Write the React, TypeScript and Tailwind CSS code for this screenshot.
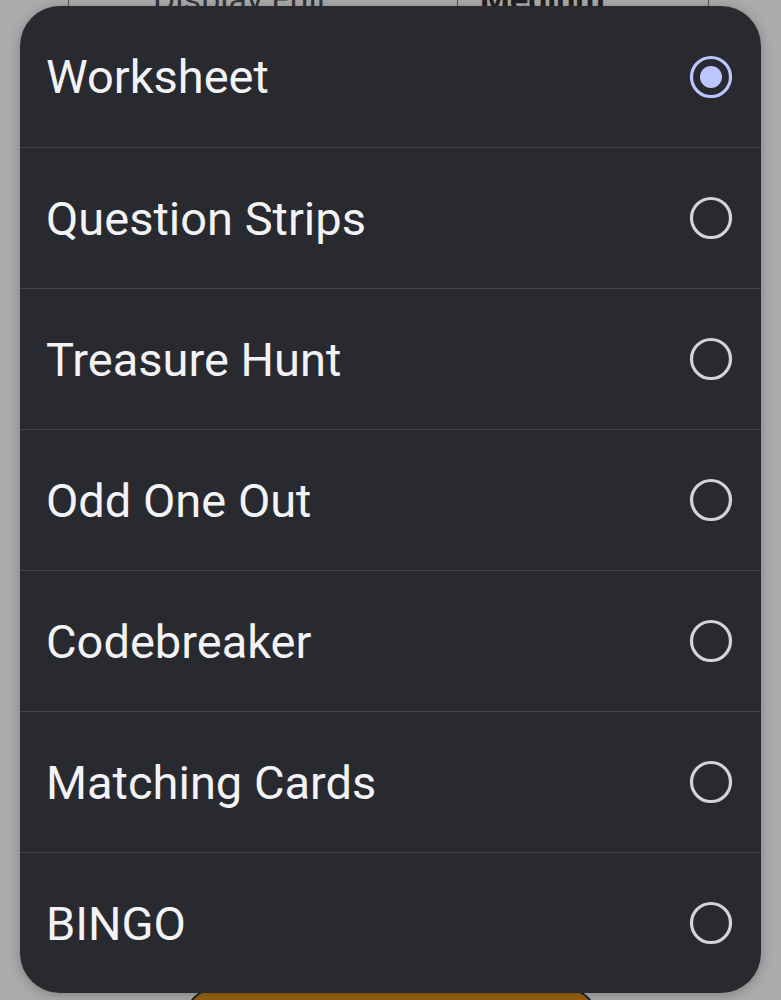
import { useState } from "react";

const options = [
  "Worksheet",
  "Question Strips",
  "Treasure Hunt",
  "Odd One Out",
  "Codebreaker",
  "Matching Cards",
  "BINGO",
];

const Radio = ({ checked }: { checked: boolean }) => (
  <svg width="44" height="44" viewBox="0 0 44 44" className="shrink-0">
    <circle
      cx="22"
      cy="22"
      r="19.5"
      fill="none"
      stroke={checked ? "#bcc7ff" : "#d3d3da"}
      strokeWidth="3.2"
    />
    {checked && <circle cx="22" cy="22" r="11" fill="#bcc7ff" />}
  </svg>
);

const App = () => {
  const [selected, setSelected] = useState("Worksheet");

  return (
    <div
      className="relative w-[781px] h-[1000px] overflow-hidden bg-[#ababab]"
      style={{ fontFamily: "Roboto, 'Noto Sans', sans-serif" }}
    >
      {/* dimmed page behind the sheet */}
      <div className="flex ml-[68px] w-[641px] h-[20px] -mt-[10px] border-x border-b border-[#555]">
        <div className="w-[389px] border-r border-[#555] pl-[84px] text-[34px] leading-[34px] text-[#333] -mt-[8px]">
          Display Full
        </div>
        <div className="flex-1 pl-[22px] text-[34px] leading-[34px] font-bold text-[#222] -mt-[8px]">
          Medium
        </div>
      </div>
      <div className="absolute left-[185px] top-[988px] w-[412px] h-[60px] rounded-[30px] bg-[#9a6412] border-2 border-[#222]" />

      {/* bottom sheet / dialog */}
      <div className="absolute left-[20px] top-[6px] w-[741px] rounded-[40px] bg-[#292a30] overflow-hidden shadow-[0_2px_12px_rgba(0,0,0,0.25)]">
        {options.map((opt, i) => (
          <button
            key={opt}
            onClick={() => setSelected(opt)}
            className={`flex items-center justify-between w-full h-[141px] pl-[26px] pr-[28px] text-left ${
              i > 0 ? "border-t border-[#44454b]" : "h-[140px]"
            }`}
          >
            <span className="text-[47px] leading-none text-[#f3f3f6]">{opt}</span>
            <Radio checked={selected === opt} />
          </button>
        ))}
      </div>
    </div>
  );
};

export default App;
